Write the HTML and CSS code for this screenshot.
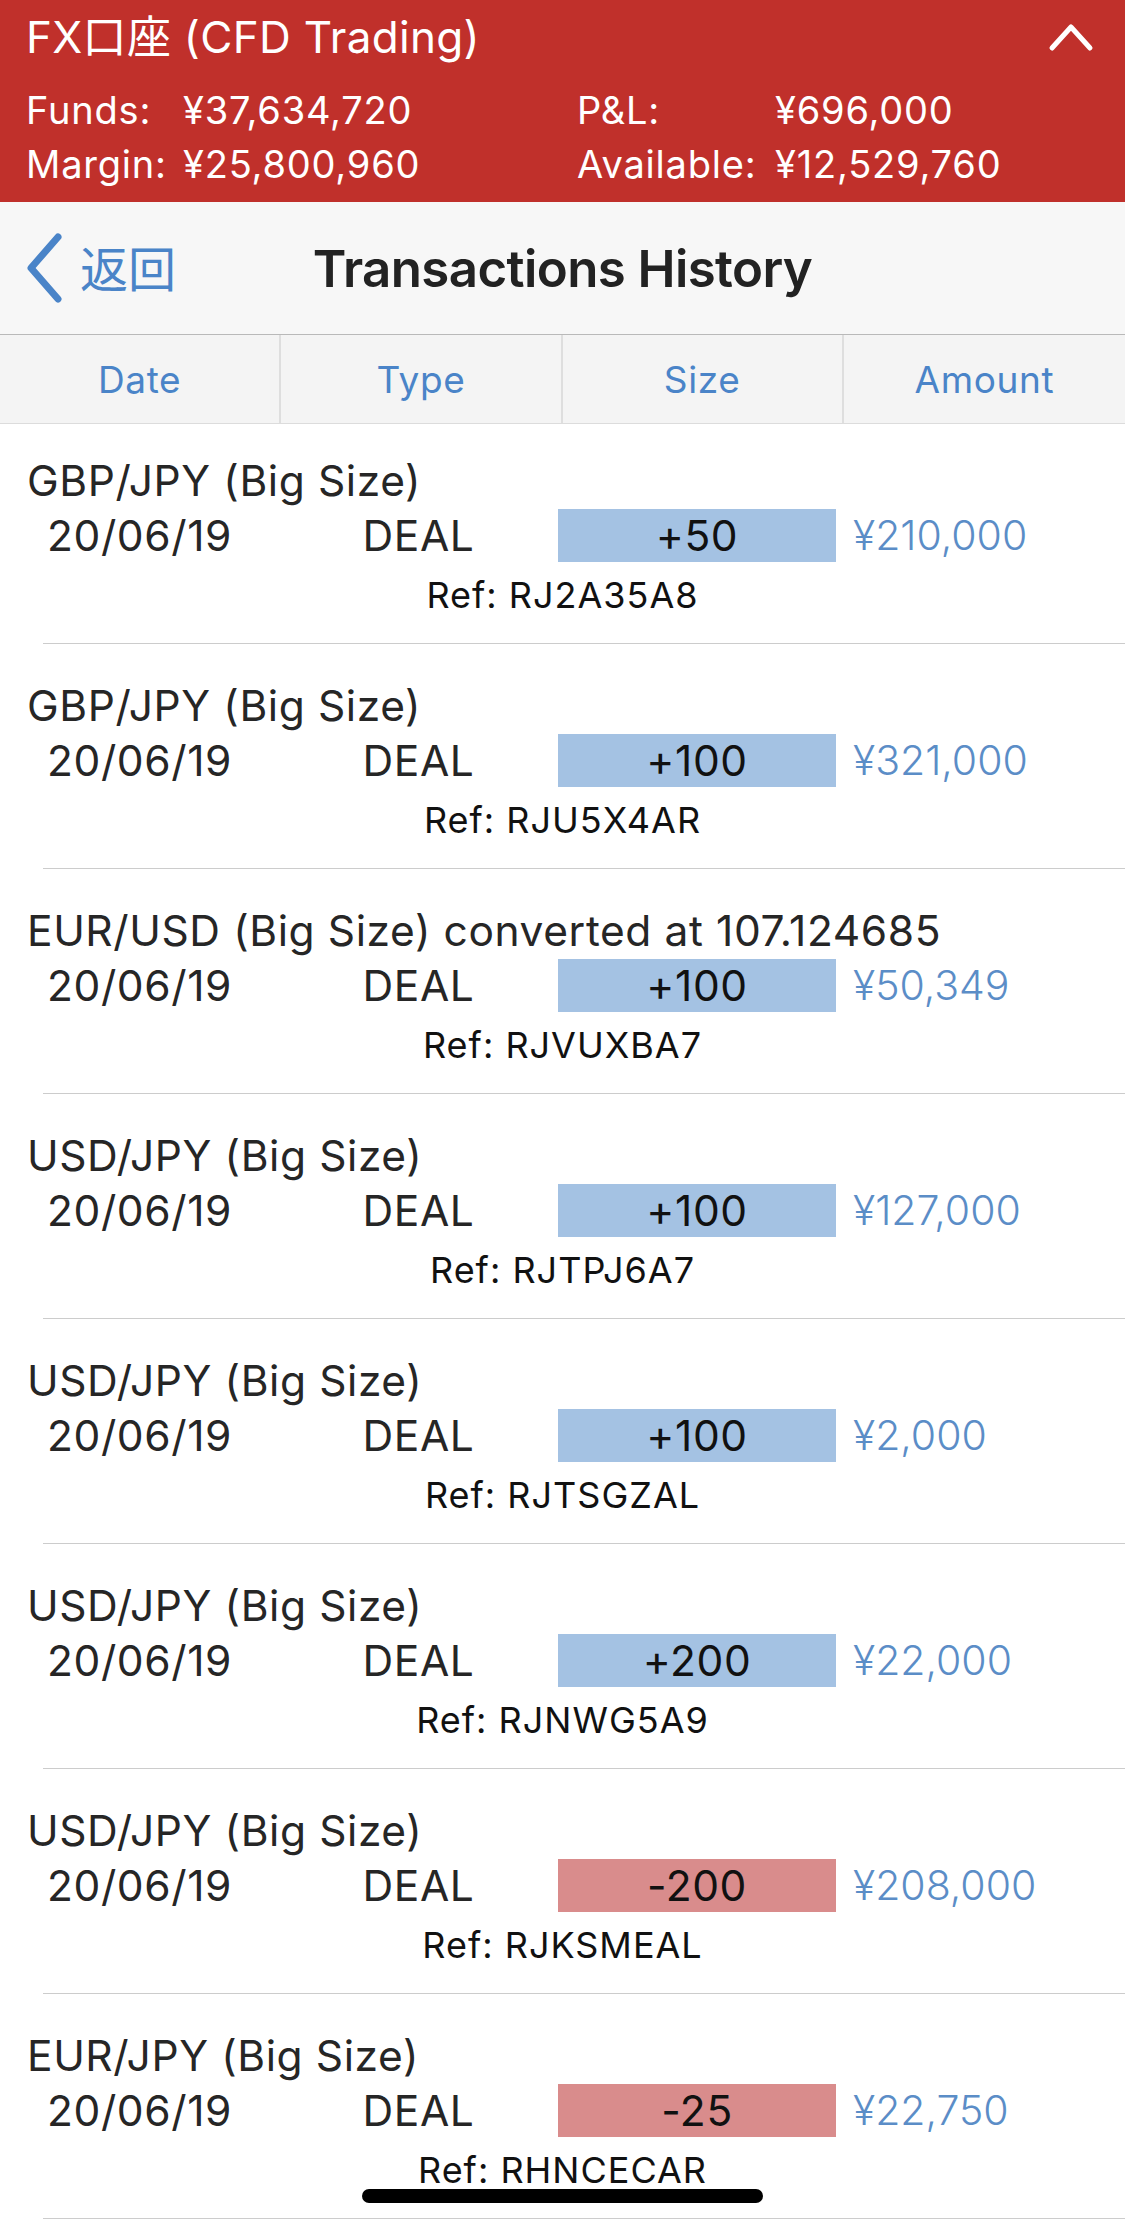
FILE: index.html
```html
<!DOCTYPE html>
<html lang="ja">
<head>
<meta charset="utf-8">
<title>Transactions History</title>
<link rel="stylesheet" href="styles.css">
</head>
<body>
<header class="acct">
  <div class="acct-top">
    <h1 class="acct-title">FX口座 (CFD Trading)</h1>
    <svg class="acct-toggle" width="46" height="30" viewBox="0 0 46 30"><polyline points="4,26 23,5 42,26" fill="none" stroke="#fff" stroke-width="5" stroke-linecap="round" stroke-linejoin="round"/></svg>
  </div>
  <div class="acct-stats">
    <span>Funds:</span><span>¥37,634,720</span><span>P&amp;L:</span><span>¥696,000</span>
    <span>Margin:</span><span>¥25,800,960</span><span>Available:</span><span>¥12,529,760</span>
  </div>
</header>

<nav class="navbar">
  <a class="back">
    <svg class="back-icon" width="44" height="70" viewBox="0 0 44 70"><polyline points="34,4 7,35 34,66" fill="none" stroke="#4a84c8" stroke-width="7" stroke-linecap="round" stroke-linejoin="round"/></svg>
    <span class="back-label">返回</span>
  </a>
  <div class="nav-title">Transactions History</div>
  <div class="nav-spacer"></div>
</nav>

<div class="cols">
  <div class="col">Date</div>
  <div class="col">Type</div>
  <div class="col">Size</div>
  <div class="col">Amount</div>
</div>

<main class="list">
  <div class="row">
    <div class="row-title">GBP/JPY (Big Size)</div>
    <div class="row-info"><span class="c-date">20/06/19</span><span class="c-type">DEAL</span><span class="c-size buy">+50</span><span class="c-amt">¥210,000</span></div>
    <div class="row-ref">Ref: RJ2A35A8</div>
  </div>
  <div class="row">
    <div class="row-title">GBP/JPY (Big Size)</div>
    <div class="row-info"><span class="c-date">20/06/19</span><span class="c-type">DEAL</span><span class="c-size buy">+100</span><span class="c-amt">¥321,000</span></div>
    <div class="row-ref">Ref: RJU5X4AR</div>
  </div>
  <div class="row">
    <div class="row-title">EUR/USD (Big Size) converted at 107.124685</div>
    <div class="row-info"><span class="c-date">20/06/19</span><span class="c-type">DEAL</span><span class="c-size buy">+100</span><span class="c-amt">¥50,349</span></div>
    <div class="row-ref">Ref: RJVUXBA7</div>
  </div>
  <div class="row">
    <div class="row-title">USD/JPY (Big Size)</div>
    <div class="row-info"><span class="c-date">20/06/19</span><span class="c-type">DEAL</span><span class="c-size buy">+100</span><span class="c-amt">¥127,000</span></div>
    <div class="row-ref">Ref: RJTPJ6A7</div>
  </div>
  <div class="row">
    <div class="row-title">USD/JPY (Big Size)</div>
    <div class="row-info"><span class="c-date">20/06/19</span><span class="c-type">DEAL</span><span class="c-size buy">+100</span><span class="c-amt">¥2,000</span></div>
    <div class="row-ref">Ref: RJTSGZAL</div>
  </div>
  <div class="row">
    <div class="row-title">USD/JPY (Big Size)</div>
    <div class="row-info"><span class="c-date">20/06/19</span><span class="c-type">DEAL</span><span class="c-size buy">+200</span><span class="c-amt">¥22,000</span></div>
    <div class="row-ref">Ref: RJNWG5A9</div>
  </div>
  <div class="row">
    <div class="row-title">USD/JPY (Big Size)</div>
    <div class="row-info"><span class="c-date">20/06/19</span><span class="c-type">DEAL</span><span class="c-size sell">-200</span><span class="c-amt">¥208,000</span></div>
    <div class="row-ref">Ref: RJKSMEAL</div>
  </div>
  <div class="row">
    <div class="row-title">EUR/JPY (Big Size)</div>
    <div class="row-info"><span class="c-date">20/06/19</span><span class="c-type">DEAL</span><span class="c-size sell">-25</span><span class="c-amt">¥22,750</span></div>
    <div class="row-ref">Ref: RHNCECAR</div>
  </div>
</main>

<div class="home-indicator"></div>
</body>
</html>
```
FILE: styles.css
```css
* { box-sizing: border-box; }
html, body { margin: 0; padding: 0; }
body {
  width: 1125px;
  min-height: 2228px;
  background: #ffffff;
  font-family: Inter, "Noto Sans", "Noto Sans CJK JP", sans-serif;
  color: #222222;
}

/* account header */
.acct {
  background: #c0302b;
  color: #ffffff;
  height: 202px;
  padding: 11px 31px 0 26px;
}
.acct-top {
  display: flex;
  align-items: center;
  justify-content: space-between;
  height: 52px;
}
.acct-title {
  margin: 0;
  font-size: 44px;
  font-weight: 400;
  line-height: 52px;
  letter-spacing: 0.3px;
  font-family: Inter, "Noto Sans CJK JP", sans-serif;
}
.acct-toggle { display: block; }
.acct-stats {
  margin-top: 20px;
  display: grid;
  grid-template-columns: 157px 394px 198px 1fr;
  font-size: 38px;
  line-height: 54px;
  letter-spacing: 0.8px;
}

/* nav */
.navbar {
  height: 133px;
  background: #f7f7f7;
  border-bottom: 1px solid #b9b9b9;
  display: grid;
  grid-template-columns: 1fr auto 1fr;
  align-items: center;
}
.back {
  display: flex;
  align-items: center;
  padding-left: 24px;
  color: #4a84c8;
}
.back-icon { display: block; margin-right: 12px; }
.back-label {
  font-family: "Noto Sans CJK JP", sans-serif;
  font-size: 48px;
  line-height: 60px;
  margin-top: -4px;
}
.nav-title {
  font-size: 51px;
  font-weight: 600;
  color: #222222;
  letter-spacing: -0.6px;
}

/* column header */
.cols {
  display: grid;
  grid-template-columns: repeat(4, 1fr);
  height: 89px;
  background: #f4f4f4;
  border-bottom: 1px solid #dcdcdc;
}
.col {
  display: flex;
  align-items: center;
  justify-content: center;
  color: #4a84c8;
  font-size: 37px;
  letter-spacing: 0.6px;
  border-right: 2px solid #dedede;
}
.col:last-child { border-right: 0; }

/* rows */
.row {
  height: 225px;
  padding-top: 38px;
  background: linear-gradient(#cccccc, #cccccc) no-repeat 43px 100% / calc(100% - 43px) 1px;
}
.row:first-child { height: 220px; padding-top: 33px; }
.row-title {
  padding-left: 27px;
  font-size: 42.5px;
  line-height: 48px;
  letter-spacing: 0.6px;
  color: #262626;
  white-space: nowrap;
}
.row-info {
  margin-top: 4px;
  height: 53px;
  display: grid;
  grid-template-columns: 279px 279px 278px 1fr;
  align-items: center;
  font-size: 42.5px;
  line-height: 53px;
  letter-spacing: 0.6px;
}
.c-date, .c-type { text-align: center; color: #262626; }
.c-size {
  height: 53px;
  text-align: center;
  color: #111111;
}
.c-size.buy { background: #a4c2e3; }
.c-size.sell { background: #d98c8c; }
.c-amt {
  padding-left: 17px;
  color: #5b8dc7;
  font-size: 41px;
  font-weight: 300;
  letter-spacing: 0;
}
.row-ref {
  margin-top: 13px;
  text-align: center;
  font-size: 36px;
  line-height: 40px;
  letter-spacing: 1px;
  color: #111111;
}

.home-indicator {
  position: fixed;
  left: 362px;
  bottom: 25px;
  width: 401px;
  height: 14px;
  border-radius: 7px;
  background: #000000;
}
```
